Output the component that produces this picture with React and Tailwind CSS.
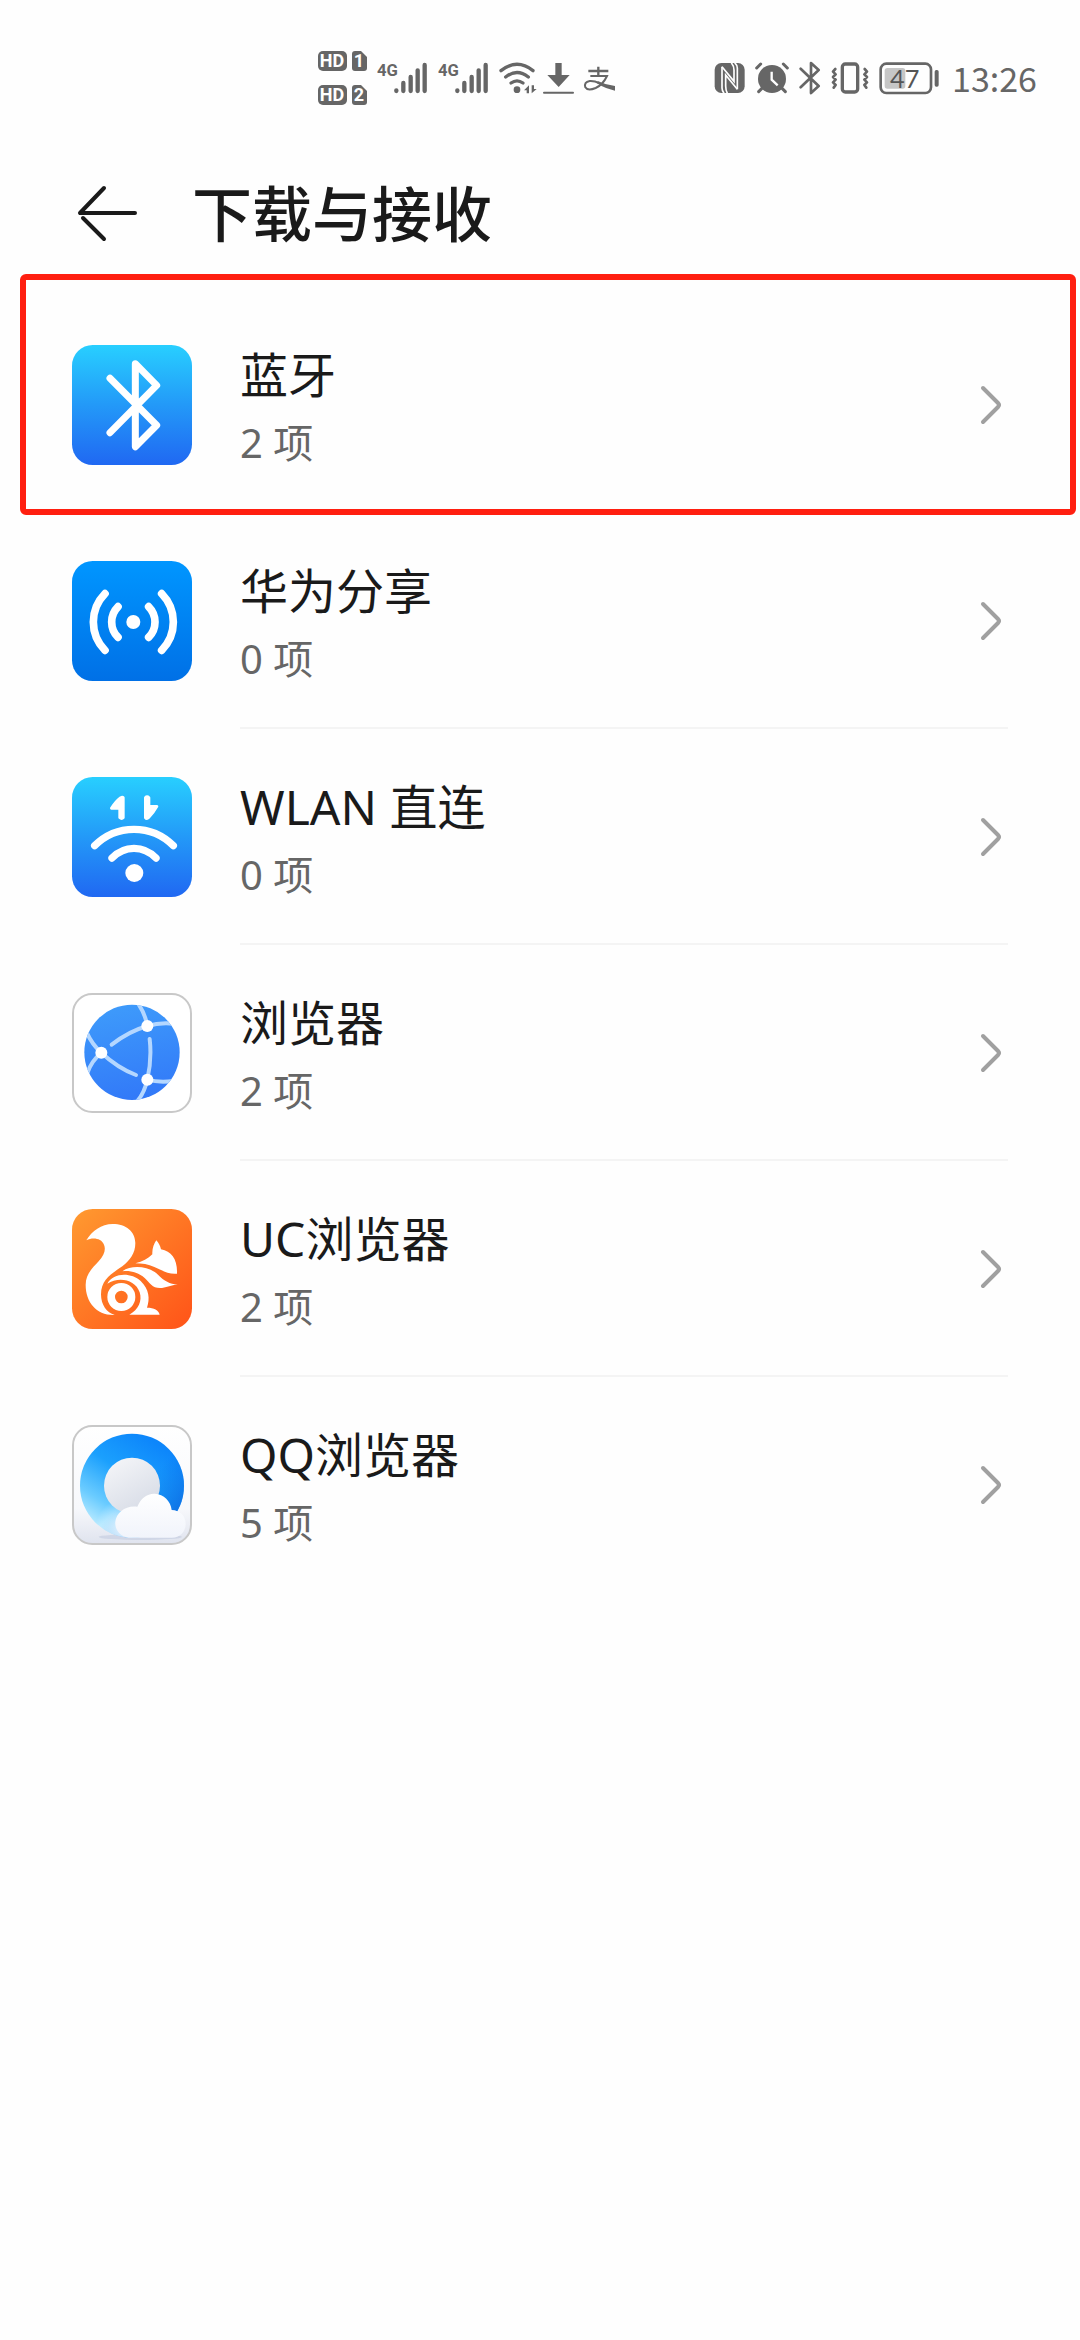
const folders = [
  { name: "蓝牙", count: 2, icon: BluetoothTile, marked: true },
  { name: "华为分享", count: 0, icon: ShareTile },
  { name: "WLAN 直连", count: 0, icon: WlanTile },
  { name: "浏览器", count: 2, icon: BrowserTile },
  { name: "UC浏览器", count: 2, icon: UcTile },
  { name: "QQ浏览器", count: 5, icon: QqTile },
];

function BluetoothTile() {
  return (
    <svg viewBox="0 0 360 360" className="size-[120px] shrink-0" aria-hidden="true">
      <defs>
        <linearGradient id="bt-bg" x1="0" y1="0" x2="0" y2="1">
          <stop offset="0" stopColor="#28cfff" />
          <stop offset="0.5" stopColor="#2399f8" />
          <stop offset="1" stopColor="#2068f2" />
        </linearGradient>
      </defs>
      <rect width="360" height="360" rx="62" fill="url(#bt-bg)" />
      <path
        d="M114 100L254 241L190 305V56L254 121L114 263"
        fill="none"
        stroke="#fff"
        strokeWidth="21"
        strokeLinecap="round"
        strokeLinejoin="round"
      />
    </svg>
  );
}

function ShareTile() {
  return (
    <svg viewBox="0 0 360 360" className="size-[120px] shrink-0" aria-hidden="true">
      <defs>
        <linearGradient id="share-bg" x1="0" y1="0" x2="0" y2="1">
          <stop offset="0" stopColor="#0096ff" />
          <stop offset="1" stopColor="#0070e6" />
        </linearGradient>
      </defs>
      <rect width="360" height="360" rx="62" fill="url(#share-bg)" />
      <circle cx="184" cy="183" r="21" fill="#fff" />
      <g fill="none" stroke="#fff" strokeWidth="23" strokeLinecap="round">
        <path d="M99 98Q64 134 64 183Q64 232 99 268" />
        <path d="M138 137Q119 156 119 183Q119 210 138 229" />
        <path d="M230 137Q249 156 249 183Q249 210 230 229" />
        <path d="M269 98Q304 134 304 183Q304 232 269 268" />
      </g>
    </svg>
  );
}

function WlanTile() {
  return (
    <svg viewBox="0 0 360 360" className="size-[120px] shrink-0" aria-hidden="true">
      <defs>
        <linearGradient id="wlan-bg" x1="0" y1="0" x2="0" y2="1">
          <stop offset="0" stopColor="#28cfff" />
          <stop offset="0.5" stopColor="#2399f8" />
          <stop offset="1" stopColor="#2068f2" />
        </linearGradient>
      </defs>
      <rect width="360" height="360" rx="62" fill="url(#wlan-bg)" />
      <g fill="none" stroke="#fff" strokeWidth="22" strokeLinecap="round">
        <path d="M68 206Q117 157 186 157Q255 157 304 206" />
        <path d="M120 243Q148 214 186 214Q224 214 252 243" />
      </g>
      <circle cx="187" cy="288" r="27" fill="#fff" />
      <g fill="#fff" stroke="#fff" strokeWidth="8" strokeLinejoin="round">
        <path d="M154 62V122Q149 128 143 122V94H118Q132 72 146 62Q151 58 154 62Z" />
        <path d="M220 62V122Q224 128 230 122Q245 106 255 88H231V62Q225 56 220 62Z" />
      </g>
    </svg>
  );
}

function BrowserTile() {
  return (
    <svg viewBox="0 0 360 360" className="size-[120px] shrink-0" aria-hidden="true">
      <defs>
        <linearGradient id="globe-fill" x1="0.3" y1="0" x2="0.5" y2="1">
          <stop offset="0" stopColor="#3e9bfb" />
          <stop offset="1" stopColor="#3279f8" />
        </linearGradient>
        <clipPath id="globe-clip">
          <circle cx="180" cy="178" r="143" />
        </clipPath>
      </defs>
      <rect x="3" y="3" width="354" height="354" rx="58" fill="#fff" stroke="#c8c8c8" strokeWidth="6" />
      <circle cx="180" cy="178" r="143" fill="url(#globe-fill)" />
      <g clipPath="url(#globe-clip)" fill="none" stroke="#b4d7ff" strokeWidth="12" strokeLinecap="round">
        <path d="M119 155Q170 115 226 99Q262 88 304 92" />
        <path d="M200 34Q220 64 226 99" />
        <path d="M233 138Q240 198 226 260Q217 300 196 324" />
        <path d="M226 260Q262 270 304 264" />
        <path d="M44 118Q60 154 88 179Q136 224 192 246" />
        <path d="M88 179Q58 204 46 240" />
      </g>
      <g fill="#fff">
        <circle cx="226" cy="99" r="18" />
        <circle cx="88" cy="179" r="18" />
        <circle cx="226" cy="260" r="18" />
      </g>
    </svg>
  );
}

function UcTile() {
  return (
    <svg viewBox="0 0 360 360" className="size-[120px] shrink-0" aria-hidden="true">
      <defs>
        <linearGradient id="uc-bg" x1="0" y1="0" x2="1" y2="1">
          <stop offset="0" stopColor="#ff9a30" />
          <stop offset="1" stopColor="#ff5318" />
        </linearGradient>
      </defs>
      <rect width="360" height="360" rx="62" fill="url(#uc-bg)" />
      <g fill="#fff">
        <path d="M43 94C60 66 88 45 122 45C162 45 190 68 190 102C190 133 174 154 151 172C119 194 87 212 87 256C87 288 104 311 128 318C74 320 41 280 41 228C41 196 60 178 80 157C97 139 102 122 96 107C88 88 63 84 43 94Z" />
        <path d="M190 163C212 158 228 149 241 136C240 119 246 103 253 94C260 102 265 111 267 121C299 127 317 152 315 194C290 197 268 183 247 174C229 166 210 163 190 163Z" />
        <path d="M151 187C180 166 232 172 258 197C277 216 293 225 317 226C302 229 288 234 270 237C242 240 234 222 218 207C200 191 174 184 151 187Z" />
        <path d="M106 224C124 190 178 190 206 216C232 241 234 270 225 296C246 296 260 303 263 317H172C200 302 211 276 203 250C190 210 139 202 106 224Z" />
        <path
          fillRule="evenodd"
          d="M148 222A42 42 0 1 0 148 306A42 42 0 1 0 148 222ZM148 245A19 19 0 1 1 148 283A19 19 0 1 1 148 245Z"
        />
      </g>
    </svg>
  );
}

function QqTile() {
  return (
    <svg viewBox="0 0 360 360" className="size-[120px] shrink-0" aria-hidden="true">
      <defs>
        <linearGradient id="qq-bg" x1="0" y1="0" x2="0" y2="1">
          <stop offset="0" stopColor="#ffffff" />
          <stop offset="0.7" stopColor="#f7f8fb" />
          <stop offset="1" stopColor="#dfe3ee" />
        </linearGradient>
        <linearGradient id="qq-ring" x1="0.2" y1="0.95" x2="0.75" y2="0.1">
          <stop offset="0" stopColor="#c4efff" />
          <stop offset="0.25" stopColor="#6bccff" />
          <stop offset="0.6" stopColor="#1ba0fd" />
          <stop offset="1" stopColor="#0d86fb" />
        </linearGradient>
        <linearGradient id="qq-shade" x1="0.4" y1="0.2" x2="1" y2="0.8">
          <stop offset="0.4" stopColor="#0a6fe8" stopOpacity="0" />
          <stop offset="1" stopColor="#0a62dc" stopOpacity="0.9" />
        </linearGradient>
        <radialGradient id="qq-glow" cx="0.5" cy="0.5" r="0.5">
          <stop offset="0" stopColor="#fff" stopOpacity="0.95" />
          <stop offset="1" stopColor="#fff" stopOpacity="0" />
        </radialGradient>
        <linearGradient id="qq-core" x1="0.2" y1="0" x2="0.8" y2="1">
          <stop offset="0" stopColor="#f4f5f8" />
          <stop offset="1" stopColor="#d5dae5" />
        </linearGradient>
        <linearGradient id="qq-cloud" x1="0" y1="0" x2="0" y2="1">
          <stop offset="0" stopColor="#ffffff" />
          <stop offset="1" stopColor="#f1f4fb" />
        </linearGradient>
        <clipPath id="qq-clip">
          <circle cx="180" cy="182" r="156" />
        </clipPath>
      </defs>
      <rect x="3" y="3" width="354" height="354" rx="58" fill="url(#qq-bg)" stroke="#c8c8c8" strokeWidth="6" />
      <ellipse cx="205" cy="336" rx="125" ry="9" fill="#c3cce0" opacity="0.6" />
      <circle cx="180" cy="182" r="156" fill="url(#qq-ring)" />
      <circle cx="180" cy="182" r="156" fill="url(#qq-shade)" />
      <circle cx="160" cy="310" r="90" fill="url(#qq-glow)" clipPath="url(#qq-clip)" />
      <circle cx="180" cy="182" r="84" fill="url(#qq-core)" />
      <path
        d="M170 338C142 334 128 312 130 290C133 262 162 240 196 245C206 220 226 205 248 206C276 208 296 228 299 255C324 256 341 273 341 296C341 321 323 338 300 338Z"
        fill="url(#qq-cloud)"
      />
    </svg>
  );
}

function HdBadge({ slot }) {
  return (
    <svg viewBox="0 0 50 20" className="h-[20px] w-[50px]" role="img" aria-label={`HD ${slot}`}>
      <rect width="29" height="20" rx="5" fill="#666" />
      <path d="M37 0H43L49 6V17Q49 20 46 20H37Q34 20 34 17V3Q34 0 37 0Z" fill="#666" />
      <g fill="#fff" fontFamily="Roboto, sans-serif" fontWeight="700" fontSize="18" textAnchor="middle">
        <text x="14" y="16">HD</text>
        <text x="41" y="16">{slot}</text>
      </g>
    </svg>
  );
}

function Signal() {
  return (
    <svg viewBox="0 0 156 108" className="h-[36px] w-[52px]" role="img" aria-label="4G">
      <text
        x="0"
        y="49"
        fill="#666"
        fontFamily="Roboto, sans-serif"
        fontWeight="700"
        fontSize="50"
      >
        4G
      </text>
      <g stroke="#666" strokeWidth="13" strokeLinecap="round">
        <path d="M58 91V93M79 69V93M101 51V93M122 31V93M143 15V93" />
      </g>
    </svg>
  );
}

function WifiStatus() {
  return (
    <svg viewBox="0 0 117 108" className="h-[36px] w-[39px]" role="img" aria-label="WLAN">
      <g fill="none" stroke="#666" strokeWidth="10" strokeLinecap="round">
        <path d="M6 32Q54 -6 102 32" />
        <path d="M20 51Q54 24 88 51" />
        <path d="M36 69Q54 56 72 69" />
      </g>
      <circle cx="54" cy="89" r="10" fill="#666" />
      <path d="M90 76V100H83V91H75ZM98 76V100L113 87H105V76Z" fill="#666" />
    </svg>
  );
}

function DownloadStatus() {
  return (
    <svg viewBox="0 0 93 108" className="h-[36px] w-[31px]" role="img" aria-label="下载">
      <path d="M37 9H56V45H80L47 81L13 45H37Z" fill="#666" />
      <path d="M3 98H90" stroke="#666" strokeWidth="6" strokeLinecap="round" />
    </svg>
  );
}

function AlipayStatus() {
  return (
    <svg viewBox="0 0 99 108" className="h-[36px] w-[33px]" role="img" aria-label="支付宝">
      <g fill="none" stroke="#666">
        <path d="M16 33H76M46 20V48" strokeWidth="7" />
        <path d="M22 48H72Q60 74 38 84Q14 94 7 82Q2 66 20 63Q34 62 50 70" strokeWidth="6" />
      </g>
      <path d="M44 63Q68 75 96 78V92Q66 86 42 70Z" fill="#666" />
    </svg>
  );
}

function NfcStatus() {
  return (
    <svg viewBox="0 0 93 108" className="h-[36px] w-[31px]" role="img" aria-label="NFC">
      <rect x="2" y="9" width="90" height="90" rx="20" fill="#666" />
      <path
        d="M24 20V84Q24 92 30 100M70 88V24Q70 16 62 8"
        fill="none"
        stroke="#fff"
        strokeWidth="5"
      />
      <path d="M24 20L60 64V30Q60 18 52 8M70 88L35 45V78Q35 90 40 100" fill="none" stroke="#fff" strokeWidth="5" />
    </svg>
  );
}

function AlarmStatus() {
  return (
    <svg viewBox="0 0 102 108" className="h-[36px] w-[34px]" role="img" aria-label="闹钟">
      <circle cx="51" cy="57" r="42" fill="#666" />
      <path
        d="M5 24L17 12M97 24L85 12M20 86L11 95M82 86L91 95"
        stroke="#666"
        strokeWidth="9"
        strokeLinecap="round"
      />
      <path d="M50 35V59L68 76" fill="none" stroke="#fff" strokeWidth="7" />
    </svg>
  );
}

function BluetoothStatus() {
  return (
    <svg viewBox="0 0 66 108" className="h-[36px] w-[22px]" role="img" aria-label="蓝牙">
      <path
        d="M5 26L59 78L36 99V9L59 30L5 82"
        fill="none"
        stroke="#666"
        strokeWidth="8"
        strokeLinecap="round"
        strokeLinejoin="round"
      />
    </svg>
  );
}

function VibrateStatus() {
  return (
    <svg viewBox="0 0 114 108" className="h-[36px] w-[38px]" role="img" aria-label="振动">
      <g fill="none" stroke="#666" strokeLinejoin="round" strokeLinecap="round">
        <rect x="34" y="12" width="46" height="84" rx="9" strokeWidth="10" />
        <path d="M13 27L6 35L14 43L6 51L14 59L6 67L14 75L8 83" strokeWidth="8" />
        <path d="M101 27L108 35L100 43L108 51L100 59L108 67L100 75L106 83" strokeWidth="8" />
      </g>
    </svg>
  );
}

function BatteryStatus() {
  return (
    <svg viewBox="0 0 183 108" className="h-[36px] w-[61px]" role="img" aria-label="47%">
      <rect x="5" y="11" width="151" height="88" rx="17" fill="none" stroke="#666" strokeWidth="8" />
      <rect x="17" y="24" width="62" height="62" rx="8" fill="#c6c6c6" />
      <rect x="167" y="30" width="12" height="50" rx="5" fill="#666" />
      <text x="77" y="83" fill="#555" fontFamily="Lato, sans-serif" fontSize="76" textAnchor="middle">
        47
      </text>
    </svg>
  );
}

function StatusBar() {
  return (
    <div className="flex h-[156px] items-center justify-between pr-[43px] pl-[318px]">
      <div className="flex items-center gap-[9px]">
        <div className="flex flex-col gap-[14px]">
          <HdBadge slot={1} />
          <HdBadge slot={2} />
        </div>
        <Signal />
        <Signal />
        <div className="flex items-center gap-[5px]">
          <WifiStatus />
          <DownloadStatus />
        </div>
        <AlipayStatus />
      </div>
      <div className="flex items-center gap-[10px]">
        <NfcStatus />
        <AlarmStatus />
        <BluetoothStatus />
        <VibrateStatus />
        <BatteryStatus />
        <time className="pl-[2px] font-['Noto_Sans_CJK_SC',sans-serif] text-[34px] leading-[36px] text-[#666]">
          13:26
        </time>
      </div>
    </div>
  );
}

function FolderRow({ name, count, icon: Icon, marked, last }) {
  return (
    <li className="relative">
      <button type="button" className="flex w-full items-center gap-12 px-[72px] text-left">
        <Icon />
        <span
          className={`flex h-[216px] flex-1 items-center justify-between border-b-2 pt-[2px] ${
            marked || last ? "border-transparent" : "border-[#f4f4f4]"
          }`}
        >
          <span className="flex flex-col pt-1">
            <span className="text-[48px] leading-[72px] text-[#1a1a1a]">{name}</span>
            <span className="text-[40px] leading-[64px] text-[#666]">{count} 项</span>
          </span>
          <svg viewBox="0 0 36 48" className="h-12 w-9" aria-hidden="true">
            <path
              d="M11 7L26 22Q28 24 26 26L11 41"
              fill="none"
              stroke="#a0a0a0"
              strokeWidth="4"
              strokeLinecap="round"
            />
          </svg>
        </span>
      </button>
      {marked && (
        <div className="pointer-events-none absolute -top-[23px] right-1 -bottom-[2px] left-5 rounded-md border-[6px] border-[#ff1f10]" />
      )}
    </li>
  );
}

export default function App() {
  return (
    <div className="min-h-screen bg-[#fefefe] font-['Noto_Sans','Noto_Sans_CJK_SC',sans-serif]">
      <StatusBar />
      <header className="flex h-[116px] items-center gap-[52px] px-[72px]">
        <button type="button" aria-label="返回">
          <svg viewBox="0 0 68 60" className="h-[60px] w-[68px]" aria-hidden="true">
            <path
              d="M32 4L8 29H63M11 34L32 55"
              fill="none"
              stroke="#1a1a1a"
              strokeWidth="4"
              strokeLinecap="round"
              strokeLinejoin="round"
            />
          </svg>
        </button>
        <h1 className="text-[60px] leading-[80px] font-medium text-[#1a1a1a]">下载与接收</h1>
      </header>
      <ul className="pt-[25px]">
        {folders.map((folder, i) => (
          <FolderRow key={folder.name} {...folder} last={i === folders.length - 1} />
        ))}
      </ul>
    </div>
  );
}
